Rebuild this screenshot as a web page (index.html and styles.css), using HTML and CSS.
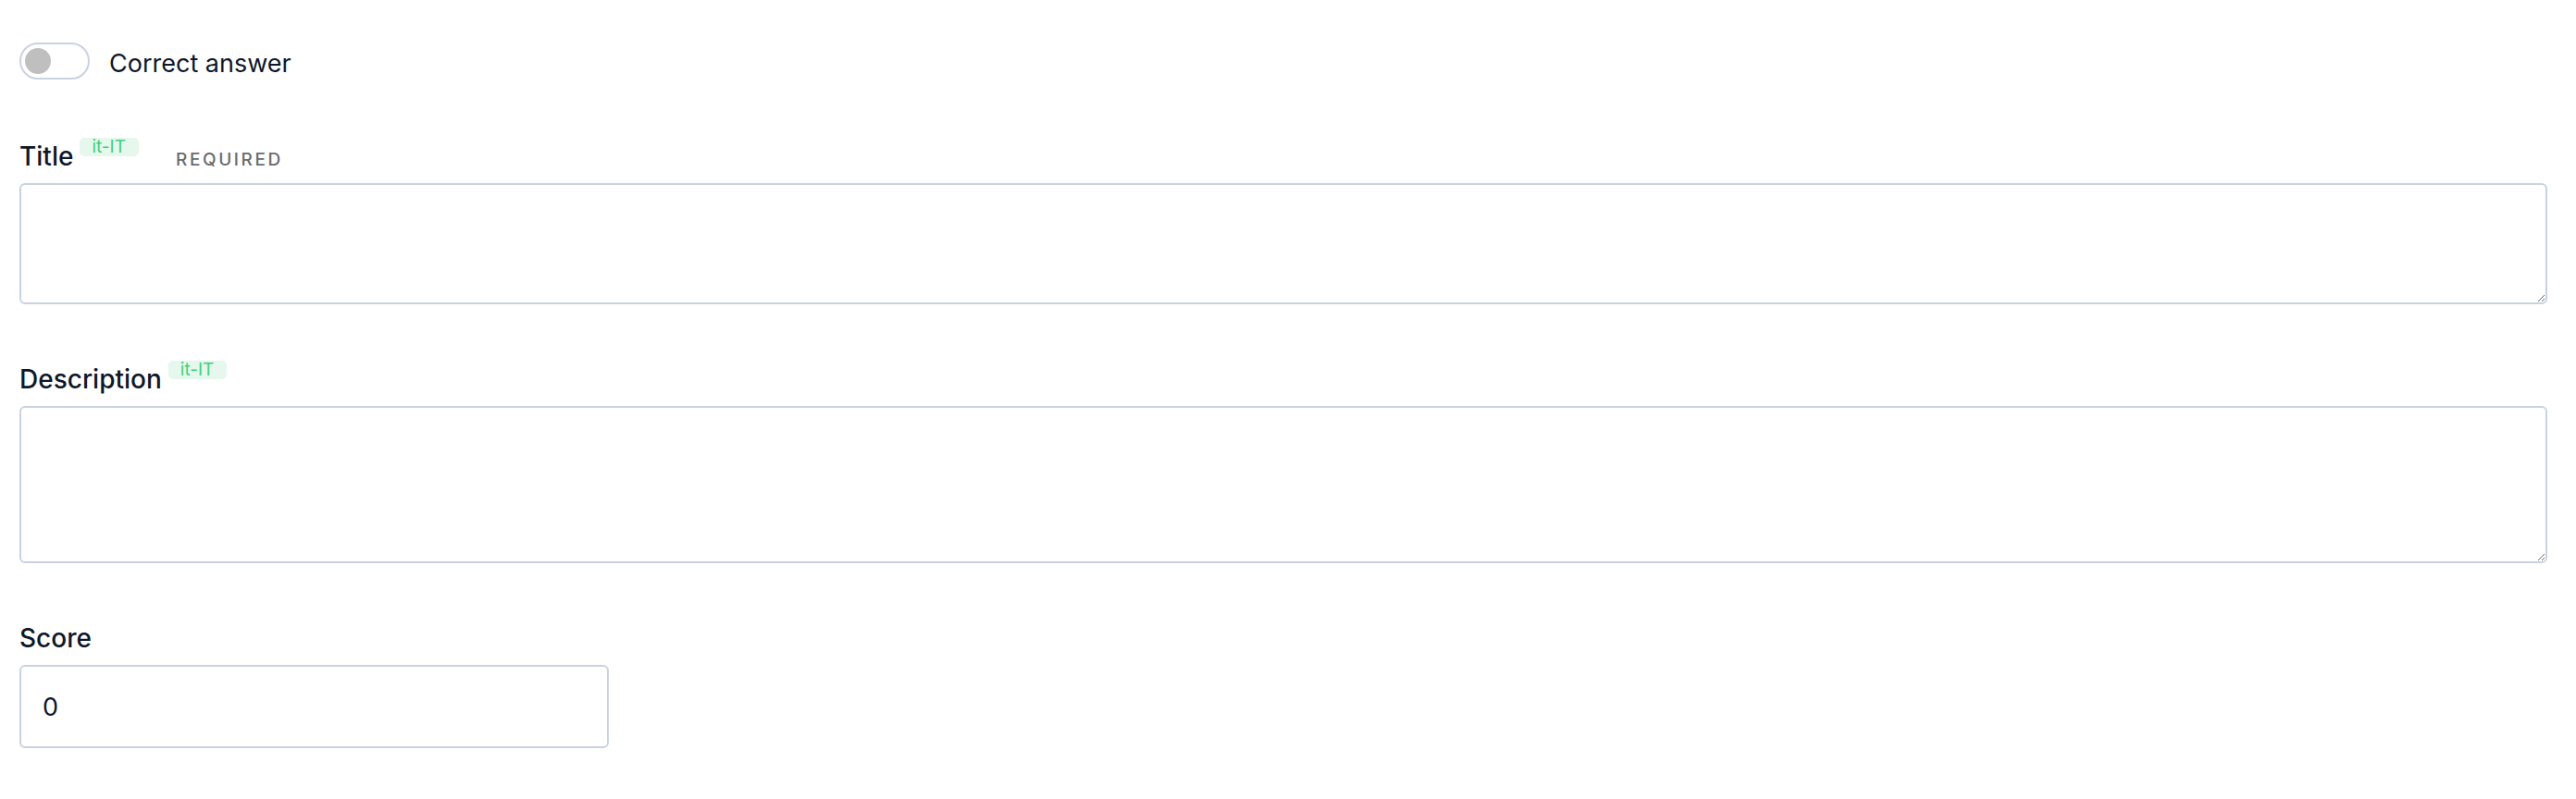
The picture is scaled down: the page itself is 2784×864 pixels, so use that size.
FILE: index.html
```html
<!DOCTYPE html>
<html lang="en">
<head>
    <meta charset="UTF-8">
    <meta name="viewport" content="width=device-width, initial-scale=1.0">
    <title>Answer</title>
    <link rel="stylesheet" href="styles.css">
</head>
<body>
    <form class="answer-form">
        <!-- Correct answer switch -->
        <label class="switch-row">
            <span class="switch"><span class="knob"></span></span>
            <span class="switch-text">Correct answer</span>
        </label>

        <div class="field">
            <label class="field-label" for="title">Title<span class="locale">it-IT</span><span class="required">Required</span></label>
            <textarea id="title" class="text-area title-area"></textarea>
        </div>

        <div class="field">
            <label class="field-label" for="description">Description<span class="locale">it-IT</span></label>
            <textarea id="description" class="text-area description-area"></textarea>
        </div>

        <div class="field">
            <label class="field-label" for="score">Score</label>
            <input type="text" id="score" class="text-input" value="0">
        </div>
    </form>
</body>
</html>
```

FILE: styles.css
```css
body {
    margin: 0;
    padding: 46px 31px 0 21px;
    font-family: Inter, "Noto Sans", sans-serif;
    color: #0f172a;
    background-color: #fff;
}
.answer-form {
    display: flex;
    flex-direction: column;
    gap: 61px;
}
.switch-row {
    display: flex;
    align-items: center;
    gap: 21px;
    height: 40px;
    margin-bottom: 2px;
}
.switch {
    box-sizing: border-box;
    display: flex;
    align-items: center;
    width: 76px;
    height: 40px;
    padding: 0 4px;
    border: 2px solid #c8d3e2;
    border-radius: 20px;
    background-color: #fff;
}
.knob {
    width: 28px;
    height: 28px;
    border-radius: 50%;
    background-color: #bfbfbf;
}
.switch-text {
    font-size: 27px;
    line-height: 40px;
    position: relative;
    top: 3px;
}
.field {
    display: flex;
    flex-direction: column;
}
.field-label {
    font-size: 28px;
    font-weight: 500;
    line-height: 40px;
    height: 40px;
    margin-bottom: 9px;
}
.locale {
    display: inline-block;
    vertical-align: top;
    margin-left: 7px;
    padding: 0 14px 0 13px;
    font-size: 19px;
    font-weight: 400;
    line-height: 20px;
    color: #3fd17b;
    background-color: #e6f7ed;
    border-radius: 5px;
}
.required {
    margin-left: 40px;
    font-size: 19px;
    font-weight: 500;
    line-height: 20px;
    letter-spacing: 2.6px;
    text-transform: uppercase;
    color: #6b6b6b;
}
.text-area, .text-input {
    box-sizing: border-box;
    border: 2px solid #c8d3e2;
    border-radius: 6px;
    font-family: Inter, "Noto Sans", sans-serif;
    font-size: 27px;
    color: #0f172a;
    background-color: #fff;
}
.text-area {
    width: 100%;
    padding: 12px 23px;
}
.title-area {
    height: 131px;
}
.description-area {
    height: 170px;
}
.text-input {
    width: 637px;
    height: 90px;
    padding: 0 23px;
}
```
